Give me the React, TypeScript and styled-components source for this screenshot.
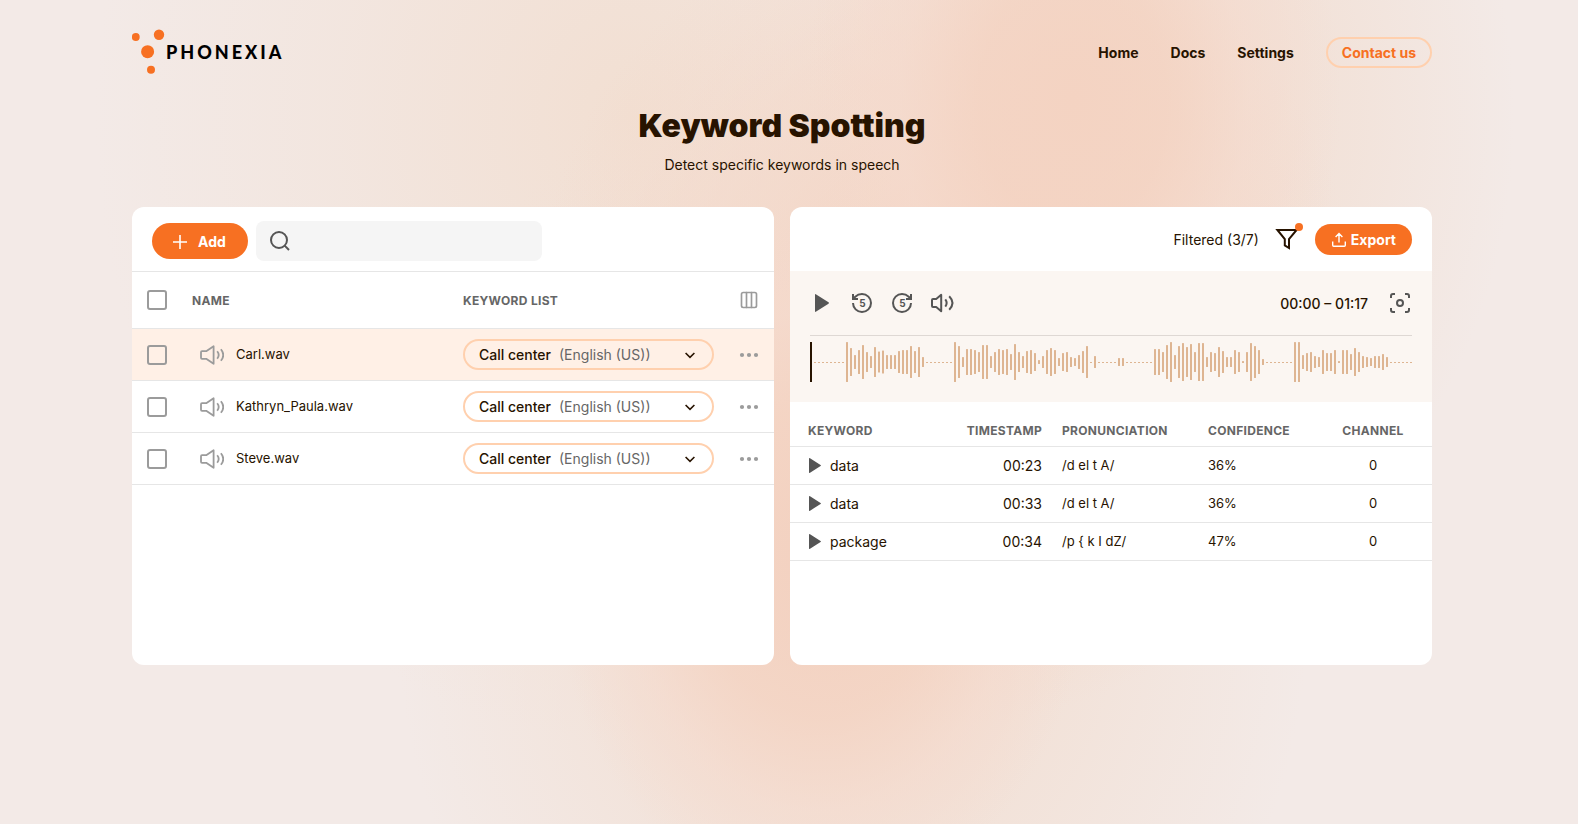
import React, { useState } from "react";
import styled, { createGlobalStyle, css } from "styled-components";
import { Columns3, Focus, RotateCcw, RotateCw, Search } from "lucide-react";

const color = {
  ink: "#271300",
  orange: "#f77022",
  peach: "#ffd0ae",
  line: "#e6e6e6",
  muted: "#666666",
  icon: "#555555",
  soft: "#9b9b9b",
  wave: "#deb592",
};

const GlobalStyle = createGlobalStyle`
  *, *::before, *::after { box-sizing: border-box; }
  body {
    margin: 0;
    color: ${color.ink};
    font-family: Inter, "Liberation Sans", sans-serif;
    font-size: 14px;
    line-height: 20px;
    background-color: #f3eae7;
  }
  button, input, select { font: inherit; color: inherit; }
`;

const Page = styled.div`
  min-height: 100vh;
  padding: 0 30px 0 16px;
  background:
    radial-gradient(ellipse 17% 44% at 68% 12%, #f4d3c2 0%, #f4d3c2cc 35%, #f5dacd99 65%, #f5dacd00 100%),
    radial-gradient(ellipse 17% 42% at 52% 68%, #f3d1c0 0%, #f4d3c2cc 45%, #f5dacd99 72%, #f5dacd00 100%),
    radial-gradient(ellipse 26% 50% at 60% 38%, #f4d3c2 0%, #f4d7c8aa 50%, #f3e0d500 100%),
    radial-gradient(ellipse 29% 70% at 54% 72%, #f2dccf 0%, #f2dfd3aa 50%, #f3eae700 100%),
    radial-gradient(ellipse 34% 76% at 40% 14%, #f2dfd2 0%, #f2e2d888 55%, #f3eae700 100%),
    radial-gradient(ellipse 25% 60% at 71% 14%, #f2ddd0 0%, #f2e0d5aa 60%, #f3eae700 100%);
`;

const Container = styled.div`
  max-width: 1300px;
  margin: 0 auto;
`;

const Header = styled.header`
  display: flex;
  align-items: center;
  justify-content: space-between;
  height: 105px;
`;

const LogoLink = styled.a`
  display: flex;
  align-items: center;
  padding-bottom: 1px;
  color: #000000;
  text-decoration: none;
`;

const Wordmark = styled.span`
  font-family: Lato, sans-serif;
  font-size: 18px;
  font-weight: 900;
  letter-spacing: 3px;
`;

const Nav = styled.nav`
  display: flex;
  align-items: center;
  gap: 32px;
`;

const NavLink = styled.a<{ $outlined?: boolean }>`
  font-weight: 700;
  color: ${color.ink};
  text-decoration: none;
  ${({ $outlined }) =>
    $outlined &&
    css`
      padding: 4px 14px 3px;
      border: 2px solid ${color.peach};
      border-radius: 16px;
      color: ${color.orange};
    `}
`;

const Intro = styled.div`
  padding-bottom: 32px;
  text-align: center;
`;

const Title = styled.h1`
  margin: 0;
  font-size: 32px;
  line-height: 42px;
  font-weight: 900;
`;

const Subtitle = styled.p`
  margin: 8px 0 0;
`;

const Panels = styled.main`
  display: grid;
  grid-template-columns: 1fr 1fr;
  gap: 16px;
`;

const Panel = styled.section`
  min-width: 0;
  min-height: 458px;
  overflow: hidden;
  border-radius: 12px;
  background: #ffffff;
`;

const Toolbar = styled.div<{ $end?: boolean }>`
  display: flex;
  align-items: center;
  justify-content: ${({ $end }) => ($end ? "flex-end" : "flex-start")};
  gap: ${({ $end }) => ($end ? 16 : 8)}px;
  height: 64px;
  padding: ${({ $end }) => ($end ? "0 20px" : "4px 20px 0")};
`;

const PrimaryButton = styled.button<{ $large?: boolean }>`
  display: flex;
  align-items: center;
  justify-content: center;
  gap: ${({ $large }) => ($large ? 11 : 4)}px;
  height: ${({ $large }) => ($large ? 36 : 31)}px;
  padding: ${({ $large }) => ($large ? "1px 22px 0 21px" : "1px 16px 0")};
  border: 0;
  border-radius: 18px;
  background: ${color.orange};
  color: #ffffff;
  font-weight: 700;
  cursor: pointer;
`;

const SearchBox = styled.label`
  display: flex;
  align-items: center;
  gap: 8px;
  flex: 0 1 286px;
  height: 40px;
  padding: 0 12px;
  border-radius: 8px;
  background: #f5f5f5;
  color: ${color.icon};
`;

const SearchInput = styled.input`
  flex: 1;
  min-width: 0;
  border: 0;
  outline: 0;
  background: transparent;
`;

const Table = styled.table`
  width: 100%;
  border-collapse: separate;
  border-spacing: 0;
  table-layout: fixed;
`;

const Col = styled.col<{ $width?: number }>`
  width: ${({ $width }) => ($width ? `${$width}px` : "auto")};
`;

const HeadCell = styled.th<{ $align?: string }>`
  padding: 0;
  border-bottom: 1px solid ${color.line};
  color: ${color.muted};
  font-size: 12px;
  font-weight: 700;
  letter-spacing: 0.3px;
  text-align: ${({ $align }) => $align ?? "left"};
  text-transform: uppercase;
`;

const Cell = styled.td<{ $align?: string; $compact?: boolean }>`
  padding: 0;
  border-bottom: 1px solid ${color.line};
  font-size: ${({ $compact }) => ($compact ? 13 : 14)}px;
  text-align: ${({ $align }) => $align ?? "left"};
`;

const CellText = styled.span`
  display: block;
  padding-bottom: 2px;
`;

const HeadText = styled.span`
  display: block;
  padding-top: 2px;
`;

const FileTable = styled(Table)`
  border-top: 1px solid ${color.line};
  ${HeadCell} { height: 57px; }
  ${Cell} { height: 52px; }
  ${HeadCell}:first-child, ${Cell}:first-child { padding-left: 15px; }
  ${HeadCell}:last-child, ${Cell}:last-child { padding-left: 7px; }
`;

const FileRow = styled.tr<{ $active: boolean }>`
  background: ${({ $active }) => ($active ? "#fff0e6" : "#ffffff")};
`;

const Checkbox = styled.input.attrs({ type: "checkbox" })`
  display: block;
  appearance: none;
  width: 20px;
  height: 20px;
  margin: 0;
  border: 2px solid ${color.soft};
  border-radius: 3px;
  &:checked {
    border-color: ${color.orange};
    background: ${color.orange};
  }
`;

const FileName = styled.div`
  display: flex;
  align-items: center;
  gap: 12px;
  padding-left: 8px;
`;

const IconButton = styled.button<{ $tone?: string }>`
  display: flex;
  align-items: center;
  justify-content: center;
  width: 24px;
  height: 24px;
  padding: 0;
  border: 0;
  background: none;
  color: ${({ $tone }) => $tone ?? color.icon};
  cursor: pointer;
`;

const SelectPill = styled.div`
  position: relative;
  display: flex;
  align-items: center;
  gap: 8px;
  height: 31px;
  margin-right: 16px;
  padding: 0 14px;
  border: 2px solid ${color.peach};
  border-radius: 16px;
  font-weight: 500;
`;

const Language = styled.span`
  flex: 1;
  color: ${color.muted};
  font-weight: 400;
`;

const NativeSelect = styled.select`
  position: absolute;
  inset: 0;
  width: 100%;
  opacity: 0;
  cursor: pointer;
`;

const FilterButton = styled(IconButton)`
  position: relative;
  color: ${color.ink};
`;

const FilterStatus = styled.span`
  padding-top: 2px;
`;

const Dot = styled.span`
  position: absolute;
  top: -4px;
  right: -4px;
  width: 8px;
  height: 8px;
  border-radius: 50%;
  background: ${color.orange};
`;

const Player = styled.div`
  padding: 20px;
  background: #fbf6f2;
`;

const Controls = styled.div`
  display: flex;
  align-items: center;
  gap: 16px;
  padding-bottom: 20px;
  border-bottom: 1px solid #ded8d4;
`;

const Time = styled.span`
  margin-left: auto;
  margin-right: 4px;
  padding-top: 1px;
  font-weight: 500;
`;

const WaveSvg = styled.svg`
  display: block;
  width: 100%;
  margin-top: 6px;
`;

const ResultTable = styled(Table)`
  ${HeadCell} { height: 45px; padding-top: 13px; }
  ${Cell} { height: 38px; }
  ${HeadCell}:nth-child(1), ${Cell}:nth-child(1) { padding-left: 18px; }
  ${HeadCell}:nth-child(2), ${Cell}:nth-child(2) { padding-right: 10px; }
  ${HeadCell}:nth-child(3), ${Cell}:nth-child(3),
  ${HeadCell}:nth-child(4), ${Cell}:nth-child(4) { padding-left: 10px; }
`;

const Keyword = styled.div`
  display: flex;
  align-items: center;
  gap: 8px;
`;

const SmallPlay = styled(IconButton)`
  width: 14px;
  height: 20px;
`;

function LogoDots() {
  return (
    <svg width="34" height="46" viewBox="0 0 34 46" fill={color.orange} aria-hidden="true">
      <circle cx="3.8" cy="8" r="3.9" />
      <circle cx="27" cy="5.7" r="5.2" />
      <circle cx="15.6" cy="22.7" r="6.5" />
      <circle cx="19" cy="40.8" r="4" />
    </svg>
  );
}

function PlayIcon({ width, height }: { width: number; height: number }) {
  return (
    <svg width={width} height={height} viewBox="0 0 14 18" preserveAspectRatio="none" fill="currentColor">
      <path d="M0 1Q0-.4 1.2.4L13.5 8.3Q14.4 9 13.5 9.7L1.2 17.6Q0 18.4 0 17Z" />
    </svg>
  );
}

function VolumeIcon() {
  return (
    <svg width="24" height="24" viewBox="1 0 24 24" fill="none" stroke="currentColor" strokeWidth="2" strokeLinejoin="round">
      <path d="M12.2 3.8V20.2L7.2 16H4Q3 16 3 15V9Q3 8 4 8H7.2Z" />
      <path d="M16.3 8.4Q19 12 16.3 15.6M20.2 5.3Q26.8 12 20.2 18.7" />
    </svg>
  );
}

function FileVolumeIcon() {
  return (
    <svg width="24" height="24" viewBox="0 0 24 24" fill="none" stroke={color.soft} strokeWidth="1.8" strokeLinejoin="round" aria-hidden="true">
      <path d="M13.6 3.2V20.8L6.2 15.8H2Q1 15.8 1 14.8V9.2Q1 8.2 2 8.2H6.2Z" />
      <path d="M17.2 8.3Q20.2 12 17.2 15.7M20.9 6.3Q25.6 12 20.9 17.7" />
    </svg>
  );
}

function SeekIcon({ back }: { back?: boolean }) {
  const Arrow = back ? RotateCcw : RotateCw;
  return (
    <svg width="24" height="24" viewBox="0 0 24 24">
      <Arrow width={24} height={24} strokeLinecap="butt" strokeLinejoin="miter" />
      <text x="12.4" y="16" textAnchor="middle" fontSize="10" fontWeight="700" fill="currentColor">5</text>
    </svg>
  );
}

function FunnelIcon() {
  return (
    <svg width="24" height="24" viewBox="0 0 24 24" fill="none" stroke="currentColor" strokeWidth="2">
      <path d="M2.4 3H21.6L14 12V21L9.8 18.4V12Z" />
    </svg>
  );
}

function ExportIcon() {
  return (
    <svg width="16" height="16" viewBox="0 0 16 16" fill="none" stroke="currentColor" strokeWidth="1.4">
      <path d="M8 10.5V2M4.6 5 8 1.6 11.4 5M1.7 9.5V13.3Q1.7 14.3 2.7 14.3H13.3Q14.3 14.3 14.3 13.3V9.5" />
    </svg>
  );
}

const WAVE = [
  0, 0, 0, 0, 0, 0, 0, 0, 0, 40, 28, 14, 24, 34, 20, 12, 30, 21, 23, 14, 14, 14, 22, 24, 24, 32, 22, 30, 10,
  0, 0, 0, 0, 0, 0, 0, 40, 32, 10, 26, 26, 24, 20, 34, 34, 12, 20, 26, 24, 26, 16, 36, 20, 12, 22, 24, 18, 4,
  12, 24, 28, 24, 8, 18, 20, 10, 8, 14, 22, 32, 0, 12, 0, 0, 0, 0, 0, 8, 8, 0, 0, 0, 0, 0, 0, 0, 26, 26, 20,
  34, 40, 14, 32, 38, 30, 36, 20, 38, 38, 10, 20, 18, 30, 22, 10, 10, 24, 20, 2, 20, 38, 32, 24, 6, 0, 0, 0,
  0, 0, 0, 0, 40, 40, 14, 18, 20, 12, 10, 24, 18, 18, 24, 2, 24, 24, 16, 28, 20, 12, 10, 8, 12, 12, 16, 10,
  0, 0, 0, 0, 0, 0,
];

function Waveform() {
  return (
    <WaveSvg viewBox="0 0 602 40" role="img" aria-label="Audio waveform">
      <rect x="0" y="0" width="2" height="40" fill={color.ink} />
      {WAVE.map((h, i) =>
        i === 0 ? null : (
          <rect key={i} x={i * 4} y={h ? 20 - h / 2 : 20} width="2" height={h || 1} rx={h ? 0.5 : 0} fill={color.wave} />
        ),
      )}
    </WaveSvg>
  );
}

const FILES = ["Carl.wav", "Kathryn_Paula.wav", "Steve.wav"];

const RESULTS = [
  { keyword: "data", time: "00:23", pronunciation: "/d el t A/", confidence: "36%", channel: 0 },
  { keyword: "data", time: "00:33", pronunciation: "/d el t A/", confidence: "36%", channel: 0 },
  { keyword: "package", time: "00:34", pronunciation: "/p { k I dZ/", confidence: "47%", channel: 0 },
];

function KeywordSelect({ file }: { file: string }) {
  return (
    <SelectPill>
      <span>Call center</span>
      <Language>(English (US))</Language>
      <svg width="16" height="16" viewBox="0 0 16 16" fill="none" stroke="currentColor" strokeWidth="1.6" aria-hidden="true">
        <path d="M3.6 6 8 10.4 12.4 6" />
      </svg>
      <NativeSelect aria-label={`Keyword list for ${file}`}>
        <option>Call center (English (US))</option>
      </NativeSelect>
    </SelectPill>
  );
}

function FilesPanel() {
  const [checked, setChecked] = useState<string[]>([]);
  const toggle = (file: string) =>
    setChecked((list) => (list.includes(file) ? list.filter((f) => f !== file) : [...list, file]));
  const all = checked.length === FILES.length;

  return (
    <Panel>
      <Toolbar>
        <PrimaryButton $large type="button">
          <svg width="14" height="14" viewBox="0 0 14 14" stroke="currentColor" strokeWidth="1.6" aria-hidden="true">
            <path d="M7 0V14M0 7H14" />
          </svg>
          Add
        </PrimaryButton>
        <SearchBox>
          <Search size={24} strokeWidth={2} strokeLinecap="butt" aria-hidden="true" />
          <SearchInput type="text" aria-label="Search files" />
        </SearchBox>
      </Toolbar>
      <FileTable>
        <colgroup>
          <Col $width={60} />
          <Col />
          <Col $width={267} />
          <Col $width={44} />
        </colgroup>
        <thead>
          <tr>
            <HeadCell>
              <Checkbox aria-label="Select all files" checked={all} onChange={() => setChecked(all ? [] : FILES)} />
            </HeadCell>
            <HeadCell>
              <HeadText>Name</HeadText>
            </HeadCell>
            <HeadCell>
              <HeadText>Keyword list</HeadText>
            </HeadCell>
            <HeadCell>
              <IconButton type="button" aria-label="Columns" $tone={color.soft}>
                <Columns3 size={20} strokeWidth={2} />
              </IconButton>
            </HeadCell>
          </tr>
        </thead>
        <tbody>
          {FILES.map((file, i) => (
            <FileRow key={file} $active={i === 0}>
              <Cell>
                <Checkbox aria-label={`Select ${file}`} checked={checked.includes(file)} onChange={() => toggle(file)} />
              </Cell>
              <Cell $compact>
                <FileName>
                  <FileVolumeIcon />
                  <CellText>{file}</CellText>
                </FileName>
              </Cell>
              <Cell>
                <KeywordSelect file={file} />
              </Cell>
              <Cell>
                <IconButton type="button" aria-label={`More actions for ${file}`} $tone={color.soft}>
                  <svg width="20" height="6" viewBox="0 0 20 6" fill="currentColor">
                    <circle cx="3" cy="3" r="2.1" />
                    <circle cx="10" cy="3" r="2.1" />
                    <circle cx="17" cy="3" r="2.1" />
                  </svg>
                </IconButton>
              </Cell>
            </FileRow>
          ))}
        </tbody>
      </FileTable>
    </Panel>
  );
}

function ResultsPanel() {
  return (
    <Panel>
      <Toolbar $end>
        <FilterStatus>Filtered (3/7)</FilterStatus>
        <FilterButton type="button" aria-label="Filter">
          <FunnelIcon />
          <Dot />
        </FilterButton>
        <PrimaryButton type="button">
          <ExportIcon />
          Export
        </PrimaryButton>
      </Toolbar>
      <Player>
        <Controls>
          <IconButton type="button" aria-label="Play">
            <PlayIcon width={14} height={18} />
          </IconButton>
          <IconButton type="button" aria-label="Back 5 seconds">
            <SeekIcon back />
          </IconButton>
          <IconButton type="button" aria-label="Forward 5 seconds">
            <SeekIcon />
          </IconButton>
          <IconButton type="button" aria-label="Volume">
            <VolumeIcon />
          </IconButton>
          <Time>00:00 – 01:17</Time>
          <IconButton type="button" aria-label="Fit to view">
            <Focus size={24} strokeWidth={2} strokeLinecap="butt" />
          </IconButton>
        </Controls>
        <Waveform />
      </Player>
      <ResultTable>
        <colgroup>
          <Col />
          <Col $width={102} />
          <Col $width={146} />
          <Col $width={116} />
          <Col $width={118} />
        </colgroup>
        <thead>
          <tr>
            <HeadCell>Keyword</HeadCell>
            <HeadCell $align="right">Timestamp</HeadCell>
            <HeadCell>Pronunciation</HeadCell>
            <HeadCell>Confidence</HeadCell>
            <HeadCell $align="center">Channel</HeadCell>
          </tr>
        </thead>
        <tbody>
          {RESULTS.map((row) => (
            <tr key={row.time}>
              <Cell>
                <Keyword>
                  <SmallPlay type="button" aria-label={`Play ${row.keyword} at ${row.time}`}>
                    <PlayIcon width={12} height={15} />
                  </SmallPlay>
                  {row.keyword}
                </Keyword>
              </Cell>
              <Cell $align="right">{row.time}</Cell>
              <Cell $compact>
                <CellText>{row.pronunciation}</CellText>
              </Cell>
              <Cell $compact>
                <CellText>{row.confidence}</CellText>
              </Cell>
              <Cell $compact $align="center">
                <CellText>{row.channel}</CellText>
              </Cell>
            </tr>
          ))}
        </tbody>
      </ResultTable>
    </Panel>
  );
}

export default function App() {
  return (
    <>
      <GlobalStyle />
      <Page>
        <Container>
          <Header>
            <LogoLink href="#" aria-label="Phonexia">
              <LogoDots />
              <Wordmark>PHONEXIA</Wordmark>
            </LogoLink>
            <Nav>
              <NavLink href="#">Home</NavLink>
              <NavLink href="#">Docs</NavLink>
              <NavLink href="#">Settings</NavLink>
              <NavLink href="#" $outlined>
                Contact us
              </NavLink>
            </Nav>
          </Header>
          <Intro>
            <Title>Keyword Spotting</Title>
            <Subtitle>Detect specific keywords in speech</Subtitle>
          </Intro>
          <Panels>
            <FilesPanel />
            <ResultsPanel />
          </Panels>
        </Container>
      </Page>
    </>
  );
}
